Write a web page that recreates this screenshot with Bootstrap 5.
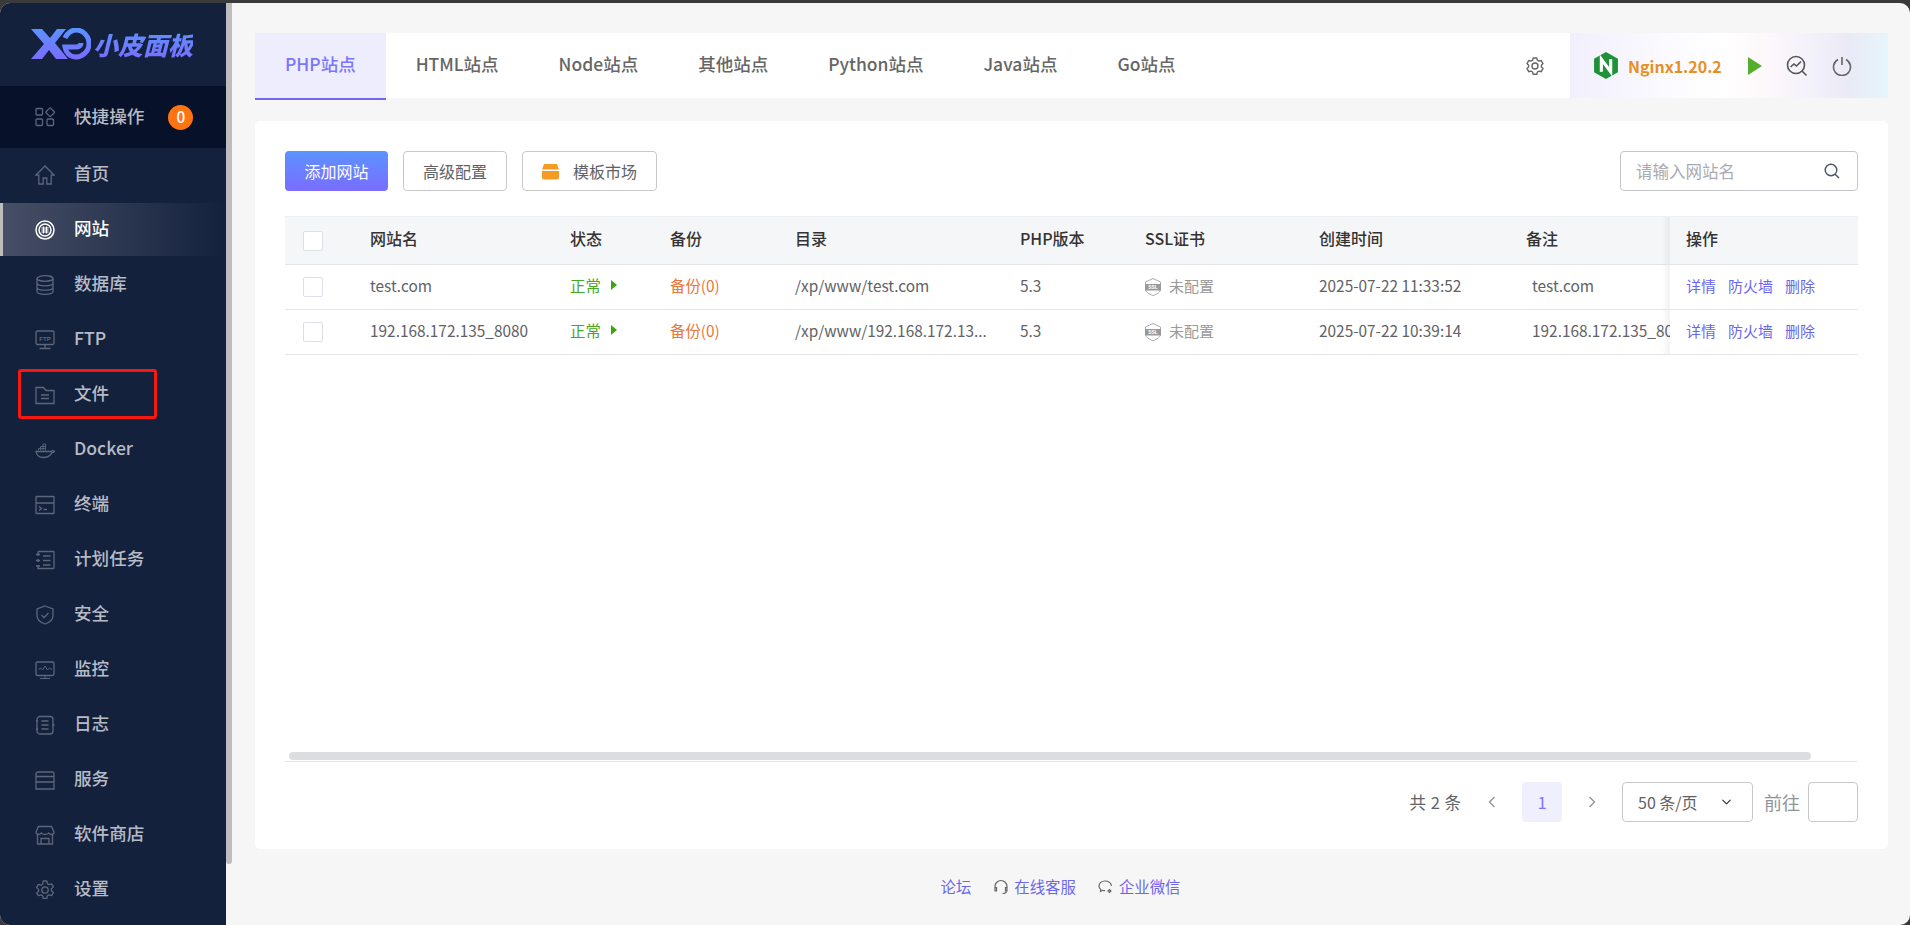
<!DOCTYPE html>
<html lang="zh-CN">
<head>
  <meta charset="UTF-8" />
  <meta name="viewport" content="width=device-width, initial-scale=1" />
  <title>小皮面板</title>
  <link href="https://cdn.jsdelivr.net/npm/bootstrap@5.3.3/dist/css/bootstrap.min.css" rel="stylesheet" />
  <style>
    html, body { height: 100%; }
    body {
      background: #3a3a3a;
      font-family: "Noto Sans CJK SC", "Noto Sans", sans-serif;
      font-size: 15.4px;
      color: #606266;
      overflow: hidden;
    }
    .app-shell {
      height: 922px;
      margin-top: 3px;
      background: #f6f6f6;
      border-radius: 10px;
      overflow: hidden;
    }
    /* sidebar */
    .side {
      width: 226px;
      background: #13213d;
      flex-shrink: 0;
    }
    .side-logo { height: 83px; padding: 25px 0 0 31px; }
    .logo-txt {
      font-size: 25px;
      line-height: 32px;
      font-weight: 900;
      font-style: italic;
      background: linear-gradient(180deg, #5b93ff, #7a6cff);
      -webkit-background-clip: text;
      background-clip: text;
      color: transparent;
      margin-left: 2px;
    }
    .side-item {
      height: 53px;
      margin-bottom: 2px;
      padding-left: 35px;
      color: #b7bbc6;
      font-size: 17.6px;
      font-weight: 500;
      text-decoration: none;
      position: relative;
    }
    .side-item > span { margin-bottom: 2px; }
    .side-item svg {
      width: 20px;
      height: 20px;
      margin-right: 19px;
      fill: none;
      stroke: #5d677c;
      stroke-width: 1.3;
      flex-shrink: 0;
    }
    .side-item svg text { fill: #5d677c; stroke: none; font-family: "Liberation Sans", sans-serif; font-size: 6px; font-weight: 700; }
    .side-quick { height: 62px; margin-bottom: 0; background: #071129; }
    .side-active {
      color: #fff;
      background: linear-gradient(90deg, #474f66 0%, #13213d 100%);
      border-left: 3px solid #bdbdbd;
      padding-left: 32px;
    }
    .side-active svg { stroke: #fff; }
    .side-item > .quick-num {
      width: 25px;
      height: 25px;
      margin: 0 0 0 24px;
      background: #ff7311;
      color: #fff;
      font-size: 15.4px;
    }
    .side-item > .mark-box {
      position: absolute;
      left: 18px;
      top: 1px;
      width: 139px;
      height: 50px;
      margin: 0;
      border: 3px solid #f5190f;
      border-radius: 3px;
      pointer-events: none;
    }
    .side-scroll { width: 6px; flex-shrink: 0; }
    .side-scroll-thumb { height: 861px; background: #bdbdbd; border-radius: 0 0 3px 3px; }
    /* main */
    .main-wrap { padding: 30px 22px 0 23px; min-width: 0; }
    .tab-bar { height: 65px; background: #fff; margin-bottom: 23px; }
    .tab-link {
      display: flex;
      align-items: center;
      height: 67px;
      padding: 0 30px 2px;
      font-size: 17.5px;
      font-weight: 500;
      color: #666;
      text-decoration: none;
      border-bottom: 2px solid transparent;
    }
    .tab-on { color: #7b75fb; background: #eeedfd; border-bottom-color: #7366f0; }
    .gear-btn { width: 20px; height: 20px; margin-right: 25px; fill: none; stroke: #666; stroke-width: 1.4; }
    .svc-panel {
      width: 318px;
      height: 65px;
      padding-left: 24px;
      background: linear-gradient(90deg, #f1effc 0%, #fbfaff 30%, #fff 48%, #fdf8fa 62%, #f3f1fa 75%, #eaeaf7 88%, #e6f5fb 100%);
    }
    .svc-name { color: #e98f22; font-size: 16px; font-weight: 700; margin: 0 26px 0 10px; }
    .panel-card {
      height: 728px;
      background: #fff;
      border-radius: 5px;
      padding: 30px 30px 0;
    }
    .tool-row { gap: 15px; }
    .btn-add {
      width: 103px;
      height: 40px;
      background: linear-gradient(180deg, #5b93ff, #7a6cff);
      color: #fff;
      border: 0;
      border-radius: 4px;
      font-size: 16px;
      padding: 0;
    }
    .btn-plain {
      height: 40px;
      background: #fff;
      border: 1px solid #c9c9c9;
      border-radius: 4px;
      color: #606266;
      font-size: 16px;
      padding: 0 19px;
    }
    .tpl-ico { margin-right: 14px; }
    .search-wrap { width: 238px; height: 40px; position: relative; }
    .search-wrap .form-control {
      height: 40px;
      border: 1px solid #c4c6cb;
      border-radius: 4px;
      font-size: 16.5px;
      padding: 0 40px 0 15px;
      box-shadow: none;
    }
    .search-wrap .form-control::placeholder { color: #a8abb2; }
    .search-wrap svg { position: absolute; right: 18px; top: 12px; width: 16px; height: 16px; fill: none; stroke: #4a5568; stroke-width: 1.4; }
    /* table */
    .tbl-wrap { margin-top: 25px; overflow: hidden; }
    .site-tbl { table-layout: fixed; width: 1620px; margin: 0; font-size: 15.4px; }
    .site-tbl th, .site-tbl td {
      padding: 0 0 2px 20px;
      vertical-align: middle;
      white-space: nowrap;
      overflow: hidden;
      border-bottom: 1px solid #e4e5e7;
      color: #606266;
      font-weight: 400;
    }
    .site-tbl th {
      height: 48px;
      padding-bottom: 5px;
      background: #f5f6f8;
      color: #333;
      font-size: 16px;
      font-weight: 500;
      border-top: 1px solid #f0f0f2;
    }
    .site-tbl td { height: 45px; }
    .site-tbl th.chk-cell, .site-tbl td.chk-cell { padding: 0 0 0 18px; }
    .c-check { width: 65px; }
    .c-name { width: 200px; }
    .c-state { width: 100px; }
    .c-backup { width: 125px; }
    .c-dir { width: 225px; }
    .c-php { width: 125px; }
    .c-ssl { width: 174px; }
    .c-time { width: 207px; }
    .c-note { width: 211px; }
    .c-ops { width: 188px; }
    .tick-box { display: block; width: 20px; height: 20px; background: #fff; border: 1px solid #dcdfe6; border-radius: 2px; }
    .site-tbl td.ops-cell, .site-tbl th.ops-cell {
      position: sticky;
      right: 0;
      overflow: visible;
      background: #fff;
      padding-left: 16px;
    }
    .site-tbl th.ops-cell { background: #f5f6f8; }
    .ops-cell::before {
      content: "";
      position: absolute;
      left: -8px;
      top: 0;
      bottom: 0;
      width: 8px;
      background: linear-gradient(90deg, rgba(0, 0, 0, 0), rgba(0, 0, 0, .05));
    }
    .ok-txt { color: #45a820; }
    .ok-arrow { display: inline-block; margin-left: 10px; border-left: 6px solid #3aa50e; border-top: 5px solid transparent; border-bottom: 5px solid transparent; vertical-align: 2px; }
    .bak-txt { color: #e9763a; text-decoration: none; }
    .site-tbl td.dim-txt { color: #999; font-size: 15px; }
    .note-txt { padding-left: 6px; display: block; overflow: hidden; }
    .ssl-ico { width: 16px; height: 18px; margin-right: 8px; vertical-align: -4px; }
    .ssl-ico text { fill: #fff; font-family: "Liberation Sans", sans-serif; font-size: 5px; font-weight: 700; }
    .op-link { color: #6b66f0; text-decoration: none; margin-right: 12px; font-size: 15px; }
    .h-scroll { height: 8px; margin-top: 397px; padding-left: 4px; }
    .h-thumb { width: 1522px; height: 8px; background: #dcdde0; border-radius: 5px; }
    .h-line { height: 1px; background: #e6e6e6; margin-top: 1px; }
    /* pager */
    .pager { margin-top: 20px; height: 40px; color: #606266; font-size: 16.5px; }
    .pg-count { margin-right: 24px; word-spacing: 1px; }
    .pg-arrow { width: 14px; height: 14px; fill: none; stroke: #909399; stroke-width: 1.4; }
    .pg-num { width: 40px; height: 40px; background: #f0effe; color: #7b75fb; border-radius: 4px; margin: 0 23px; }
    .pg-select.form-select {
      width: 131px;
      height: 40px;
      margin-left: 23px;
      padding: 0 0 0 15px;
      border: 1px solid #c9c9c9;
      border-radius: 4px;
      font-size: 16px;
      color: #606266;
      background-position: right 19px center;
      background-size: 13px 10px;
      box-shadow: none;
    }
    .pg-goto { margin: 0 8px 0 11px; color: #909399; font-size: 18px; }
    .pg-input.form-control { width: 50px; height: 40px; border: 1px solid #c9c9c9; border-radius: 4px; box-shadow: none; }
    /* footer */
    .foot-links { height: 76px; font-size: 15.4px; gap: 22px; padding-right: 22px; }
    .foot-links a { color: #6b66f0; text-decoration: none; }
    .foot-links svg { width: 16px; height: 16px; margin-right: 5px; fill: none; stroke: #666; stroke-width: 1.2; }
  </style>
</head>
<body>
  <div class="app-shell d-flex">
    <aside class="side">
      <div class="side-logo d-flex align-items-start">
        <svg width="60" height="32" viewBox="0 0 60 32" fill="none" aria-label="XO">
          <defs><linearGradient id="lg" gradientUnits="userSpaceOnUse" x1="0" y1="0" x2="0" y2="32"><stop offset="0" stop-color="#5b93ff"/><stop offset="1" stop-color="#7a6cff"/></linearGradient></defs>
          <path d="M0 1h11l8 9 7-9h9L24 15l13 16H25l-7-9-7 9H0l13-15z" fill="url(#lg)"/>
          <path d="M34 10c2-5 7-8 11-8 7 0 13 6 13 13.500S52 29 45 29c-6 0-10-4-11-10 5 0 8 0 11 0 3 0 5-1.500 5-4" stroke="url(#lg)" stroke-width="5"/>
        </svg>
        <span class="logo-txt">小皮面板</span>
      </div>

      <a href="#" class="side-item side-quick d-flex align-items-center">
        <svg viewBox="0 0 20 20"><rect x="1" y="1.500" width="6.500" height="6.500" rx="1"/><rect x="12" y="2" width="6.500" height="6.500" rx="1" transform="rotate(45 15.2 5.200)"/><rect x="1" y="12" width="6.500" height="6.500" rx="1"/><rect x="12" y="12" width="6.500" height="6.500" rx="1"/></svg>
        <span>快捷操作</span>
        <span class="quick-num rounded-circle d-flex align-items-center justify-content-center">0</span>
      </a>
      <a href="#" class="side-item d-flex align-items-center">
        <svg viewBox="0 0 20 20"><path d="M10 1 .8 10.200h3V19h4.400v-6h3.600v6h4.400v-8.800h3z"/></svg>
        <span>首页</span>
      </a>
      <a href="#" class="side-item side-active d-flex align-items-center">
        <svg viewBox="0 0 20 20"><circle cx="10" cy="10" r="9" stroke-width="1.500"/><circle cx="10" cy="10" r="6" stroke-width="1.500"/><path d="M6.500 8h7M6.500 10h7M6.500 12h7M8.500 6.500v7M11.500 6.500v7" stroke-width="1"/></svg>
        <span>网站</span>
      </a>
      <a href="#" class="side-item d-flex align-items-center">
        <svg viewBox="0 0 20 20"><ellipse cx="10" cy="3.500" rx="8" ry="2.800"/><path d="M2 3.500v13c0 1.600 3.600 2.800 8 2.800s8-1.200 8-2.800v-13M2 8c0 1.600 3.600 2.800 8 2.800S18 9.600 18 8M2 12.400c0 1.600 3.600 2.800 8 2.800s8-1.200 8-2.800"/></svg>
        <span>数据库</span>
      </a>
      <a href="#" class="side-item d-flex align-items-center">
        <svg viewBox="0 0 20 20"><rect x="1" y="1" width="18" height="13.500" rx="1.500"/><path d="M10 14.500V18M4.500 18.500h11"/><text x="10" y="10.500" text-anchor="middle">FTP</text></svg>
        <span>FTP</span>
      </a>
      <a href="#" class="side-item d-flex align-items-center">
        <svg viewBox="0 0 20 20"><path d="M1 2.500h7.500L11 5.500h8v13H1zM6 10h8M6 13.500h8"/></svg>
        <span>文件</span>
        <span class="mark-box"></span>
      </a>
      <a href="#" class="side-item d-flex align-items-center">
        <svg viewBox="0 0 20 20"><path d="M1 11.500h14.500c.8 0 1.500-.5 1.800-1l2.200.8c-.8 1-1.800 1.300-2.500 1.300C15.500 15.500 12.500 17.500 8 17.500c-4 0-6.500-2.500-7-6z"/><path d="M3.500 10.500v-2h2v2M5.500 8.500h2.500M8 10.500v-2h2.500v2M5.500 8.500v-2H8v2M8 6.500V4h2.500v2.500M8 6.500h2.500v2" stroke-width=".9"/></svg>
        <span>Docker</span>
      </a>
      <a href="#" class="side-item d-flex align-items-center">
        <svg viewBox="0 0 20 20"><rect x="1" y="1.500" width="18" height="17" rx=".5"/><path d="M1 8h18M4 11.500l2.500 2-2.500 2M8.500 14.500H12"/></svg>
        <span>终端</span>
      </a>
      <a href="#" class="side-item d-flex align-items-center">
        <svg viewBox="0 0 20 20"><path d="M3 1.500h15.500a.5.500 0 0 1 .5.500v16a.5.500 0 0 1-.5.500H3V15M3 12v-3M3 6V1.500M1 4.500h4M1 10.500h4M1 16h4M8 6h7.500M8 10.500h7.500M8 15h7.500"/></svg>
        <span>计划任务</span>
      </a>
      <a href="#" class="side-item d-flex align-items-center">
        <svg viewBox="0 0 20 20"><path d="M10 1 18 4v6.500c0 4-3.500 7-8 8.500-4.500-1.500-8-4.500-8-8.500V4zM6.500 10l2.500 2.500 4.500-4.500"/></svg>
        <span>安全</span>
      </a>
      <a href="#" class="side-item d-flex align-items-center">
        <svg viewBox="0 0 20 20"><rect x="1" y="2" width="18" height="13.500" rx="1.500"/><path d="M10 15.500V18M5 18.500h10M3.500 9.500l2-1.500 2 2 2.500-4 2.500 4 2-2 2.500 1.500" stroke-width="1"/></svg>
        <span>监控</span>
      </a>
      <a href="#" class="side-item d-flex align-items-center">
        <svg viewBox="0 0 20 20"><rect x="2" y="1.500" width="16" height="17.500" rx="3"/><path d="M6.500 6h7M6.500 10h7M6.500 14h7M1 6h2M1 14h2M17.500 10h2"/></svg>
        <span>日志</span>
      </a>
      <a href="#" class="side-item d-flex align-items-center">
        <svg viewBox="0 0 20 20"><path d="M1 19V4c0-1 .8-2 2-2h14c1.200 0 2 1 2 2v15zM1 6.500h18M1 12h18"/></svg>
        <span>服务</span>
      </a>
      <a href="#" class="side-item d-flex align-items-center">
        <svg viewBox="0 0 20 20"><path d="M3.500 1.500h13L19 7c0 1.500-1 2.500-2.500 2.500S14 8.500 13.500 8c-.5.800-2 1.500-3.500 1.500S7 8.800 6.500 8C6 8.500 5 9.500 3.500 9.500S1 8.500 1 7zM2.500 9.500V19h15V9.500M6 19v-5.500h8V19"/></svg>
        <span>软件商店</span>
      </a>
      <a href="#" class="side-item d-flex align-items-center">
        <svg viewBox="0 0 20 20"><circle cx="10" cy="10" r="3.200"/><path d="M8.200 1h3.600l.6 2.700 1.600.9 2.600-.8 1.800 3.100-2 1.900v1.800l2 1.900-1.800 3.100-2.600-.8-1.600.9-.6 2.700H8.200l-.6-2.700-1.600-.9-2.600.8L1.600 13.100l2-1.900V9.400l-2-1.900 1.800-3.100 2.600.8 1.600-.9z" stroke-linejoin="round"/></svg>
        <span>设置</span>
      </a>
    </aside>
    <div class="side-scroll"><div class="side-scroll-thumb"></div></div>

    <main class="main-wrap flex-grow-1 d-flex flex-column">
      <div class="tab-bar d-flex align-items-start">
        <nav class="d-flex">
          <a href="#" class="tab-link tab-on">PHP站点</a>
          <a href="#" class="tab-link">HTML站点</a>
          <a href="#" class="tab-link">Node站点</a>
          <a href="#" class="tab-link">其他站点</a>
          <a href="#" class="tab-link">Python站点</a>
          <a href="#" class="tab-link">Java站点</a>
          <a href="#" class="tab-link">Go站点</a>
        </nav>
        <div class="ms-auto d-flex align-items-center">
          <svg class="gear-btn" viewBox="0 0 20 20"><circle cx="10" cy="10" r="3"/><path d="M8.200 2h3.600l.6 2.200 1.600.9 2.200-.6 1.800 3.100-1.600 1.600v1.800l1.600 1.600-1.800 3.100-2.200-.6-1.600.9-.6 2.200H8.200l-.6-2.200-1.600-.9-2.200.6-1.800-3.100 1.600-1.600V9.200L2 7.600l1.800-3.100 2.200.6 1.600-.9z" stroke-linejoin="round"/></svg>
          <div class="svc-panel d-flex align-items-center">
            <svg width="24" height="27" viewBox="0 0 23 26"><path d="M11.500 0 23 6.500v13L11.500 26 0 19.500v-13z" fill="#1f9139"/><path d="M7 19V7l9 12V7" fill="none" stroke="#fff" stroke-width="3"/></svg>
            <span class="svc-name">Nginx1.20.2</span>
            <svg width="14" height="18" viewBox="0 0 14 18" class="me-3"><path d="M0 0l14 9-14 9z" fill="#52ae2b"/></svg>
            <svg width="22" height="22" viewBox="0 0 22 22" fill="none" stroke="#555" stroke-width="1.600" class="ms-2"><circle cx="10" cy="10" r="8.500"/><path d="M4.500 12l3.500-3 2.500 2 4.500-4.500M16 16l4.500 4.500"/></svg>
            <svg width="20" height="20" viewBox="0 0 20 20" fill="none" stroke="#666" stroke-width="1.600" class="ms-4"><path d="M6 3.500a8.500 8.500 0 1 0 8 0M10 1v8"/></svg>
          </div>
        </div>
      </div>

      <section class="panel-card">
        <div class="d-flex align-items-center tool-row">
          <button class="btn-add">添加网站</button>
          <button class="btn-plain">高级配置</button>
          <button class="btn-plain d-flex align-items-center">
            <svg width="17" height="17" viewBox="0 0 17 17" class="tpl-ico"><path d="M2 1h13l2 5.500H0zM0 8h17v6.500a2 2 0 0 1-2 2H2a2 2 0 0 1-2-2z" fill="#f59b23"/></svg>
            模板市场
          </button>
          <div class="search-wrap ms-auto">
            <input class="form-control" type="text" placeholder="请输入网站名" />
            <svg viewBox="0 0 16 16"><circle cx="7" cy="7" r="5.800"/><path d="M11.200 11.200 15 15"/></svg>
          </div>
        </div>

        <div class="tbl-wrap">
          <table class="table site-tbl">
            <colgroup>
              <col class="c-check"><col class="c-name"><col class="c-state"><col class="c-backup"><col class="c-dir"><col class="c-php"><col class="c-ssl"><col class="c-time"><col class="c-note"><col class="c-ops">
            </colgroup>
            <thead>
              <tr>
                <th class="chk-cell"><span class="tick-box"></span></th>
                <th>网站名</th><th>状态</th><th>备份</th><th>目录</th><th>PHP版本</th><th>SSL证书</th><th>创建时间</th><th>备注</th>
                <th class="ops-cell">操作</th>
              </tr>
            </thead>
            <tbody>
              <tr>
                <td class="chk-cell"><span class="tick-box"></span></td>
                <td>test.com</td>
                <td><span class="ok-txt">正常</span><span class="ok-arrow"></span></td>
                <td><a href="#" class="bak-txt">备份(0)</a></td>
                <td>/xp/www/test.com</td>
                <td>5.3</td>
                <td class="dim-txt"><svg class="ssl-ico" viewBox="0 0 16 18"><path d="M8 .5 15.500 4v7c0 3-3.500 5.500-7.500 6.500C4 16.500.5 14 .5 11V4z" fill="none" stroke="#aaa"/><rect x="0" y="6" width="16" height="6.500" fill="#999"/><text x="8" y="11.200" text-anchor="middle">SSL</text></svg>未配置</td>
                <td>2025-07-22 11:33:52</td>
                <td><span class="note-txt">test.com</span></td>
                <td class="ops-cell"><a href="#" class="op-link">详情</a><a href="#" class="op-link">防火墙</a><a href="#" class="op-link">删除</a></td>
              </tr>
              <tr>
                <td class="chk-cell"><span class="tick-box"></span></td>
                <td>192.168.172.135_8080</td>
                <td><span class="ok-txt">正常</span><span class="ok-arrow"></span></td>
                <td><a href="#" class="bak-txt">备份(0)</a></td>
                <td>/xp/www/192.168.172.13...</td>
                <td>5.3</td>
                <td class="dim-txt"><svg class="ssl-ico" viewBox="0 0 16 18"><path d="M8 .5 15.500 4v7c0 3-3.500 5.500-7.500 6.500C4 16.500.5 14 .5 11V4z" fill="none" stroke="#aaa"/><rect x="0" y="6" width="16" height="6.500" fill="#999"/><text x="8" y="11.200" text-anchor="middle">SSL</text></svg>未配置</td>
                <td>2025-07-22 10:39:14</td>
                <td><span class="note-txt">192.168.172.135_8080</span></td>
                <td class="ops-cell"><a href="#" class="op-link">详情</a><a href="#" class="op-link">防火墙</a><a href="#" class="op-link">删除</a></td>
              </tr>
            </tbody>
          </table>
        </div>

        <div class="h-scroll"><div class="h-thumb"></div></div>
        <div class="h-line"></div>

        <div class="pager d-flex align-items-center justify-content-end">
          <span class="pg-count">共 2 条</span>
          <svg class="pg-arrow" viewBox="0 0 14 14"><path d="M9.500 2 4.500 7l5 5"/></svg>
          <span class="pg-num d-flex align-items-center justify-content-center">1</span>
          <svg class="pg-arrow" viewBox="0 0 14 14"><path d="M4.500 2l5 5-5 5"/></svg>
          <select class="form-select pg-select"><option>50 条/页</option></select>
          <span class="pg-goto">前往</span>
          <input class="form-control pg-input" type="text" />
        </div>
      </section>

      <footer class="foot-links d-flex align-items-center justify-content-center">
        <a href="#">论坛</a>
        <a href="#" class="d-flex align-items-center">
          <svg viewBox="0 0 16 16"><path d="M2 10V7.500a6 6 0 0 1 12 0V10M2 8.500h1.500V12H2zM12.500 8.500H14V12h-1.500zM13.500 12c0 1.500-2 2.500-4 2.500"/></svg>在线客服
        </a>
        <a href="#" class="d-flex align-items-center">
          <svg viewBox="0 0 16 16"><path d="M7 2C3.500 2 1 4 1 7c0 1.500.6 2.600 1.800 3.500L2.500 12.500l2.200-1.200C5.500 11.500 6.200 11.600 7 11.600M13.500 7C13 4 10.500 2 7 2M10 12l1.500-1.500L13 12l-1.500 1.500z"/></svg>企业微信
        </a>
      </footer>
    </main>
  </div>

  <script src="https://cdn.jsdelivr.net/npm/bootstrap@5.3.3/dist/js/bootstrap.bundle.min.js"></script>
</body>
</html>
